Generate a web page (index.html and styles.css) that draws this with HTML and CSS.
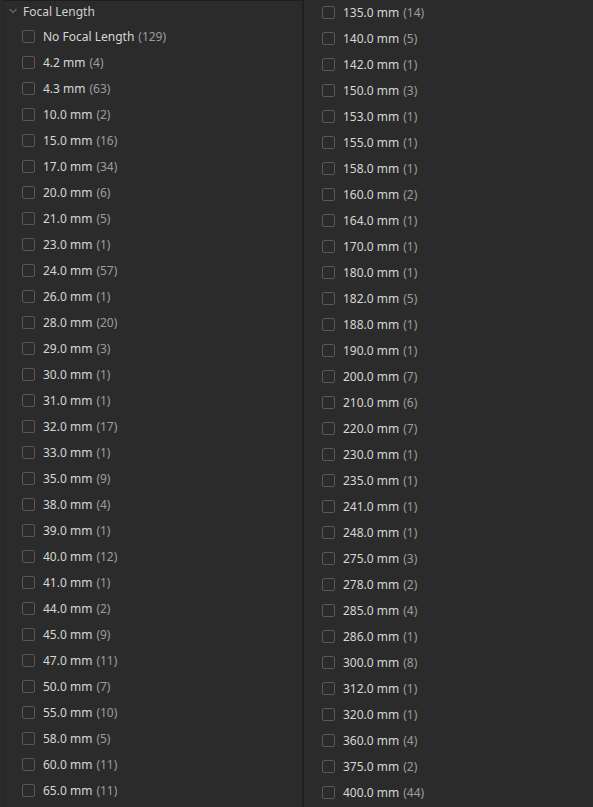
FILE: index.html
```html
<!DOCTYPE html>
<html>
<head>
<meta charset="utf-8">
<link rel="stylesheet" href="styles.css">
</head>
<body>
<div class="panel">
  <div class="col col-left">
    <div class="header">
      <svg class="chev" width="8" height="6" viewBox="0 0 8 6"><path d="M0.5 1 L4 4.5 L7.5 1" fill="none" stroke="#9a9a9a" stroke-width="1"/></svg>
      <span class="title">Focal Length</span>
    </div>
    <div class="row"><span class="box"></span><span class="lbl">No Focal Length</span><span class="cnt">(129)</span></div>
    <div class="row"><span class="box"></span><span class="lbl">4.2 mm</span><span class="cnt">(4)</span></div>
    <div class="row"><span class="box"></span><span class="lbl">4.3 mm</span><span class="cnt">(63)</span></div>
    <div class="row"><span class="box"></span><span class="lbl">10.0 mm</span><span class="cnt">(2)</span></div>
    <div class="row"><span class="box"></span><span class="lbl">15.0 mm</span><span class="cnt">(16)</span></div>
    <div class="row"><span class="box"></span><span class="lbl">17.0 mm</span><span class="cnt">(34)</span></div>
    <div class="row"><span class="box"></span><span class="lbl">20.0 mm</span><span class="cnt">(6)</span></div>
    <div class="row"><span class="box"></span><span class="lbl">21.0 mm</span><span class="cnt">(5)</span></div>
    <div class="row"><span class="box"></span><span class="lbl">23.0 mm</span><span class="cnt">(1)</span></div>
    <div class="row"><span class="box"></span><span class="lbl">24.0 mm</span><span class="cnt">(57)</span></div>
    <div class="row"><span class="box"></span><span class="lbl">26.0 mm</span><span class="cnt">(1)</span></div>
    <div class="row"><span class="box"></span><span class="lbl">28.0 mm</span><span class="cnt">(20)</span></div>
    <div class="row"><span class="box"></span><span class="lbl">29.0 mm</span><span class="cnt">(3)</span></div>
    <div class="row"><span class="box"></span><span class="lbl">30.0 mm</span><span class="cnt">(1)</span></div>
    <div class="row"><span class="box"></span><span class="lbl">31.0 mm</span><span class="cnt">(1)</span></div>
    <div class="row"><span class="box"></span><span class="lbl">32.0 mm</span><span class="cnt">(17)</span></div>
    <div class="row"><span class="box"></span><span class="lbl">33.0 mm</span><span class="cnt">(1)</span></div>
    <div class="row"><span class="box"></span><span class="lbl">35.0 mm</span><span class="cnt">(9)</span></div>
    <div class="row"><span class="box"></span><span class="lbl">38.0 mm</span><span class="cnt">(4)</span></div>
    <div class="row"><span class="box"></span><span class="lbl">39.0 mm</span><span class="cnt">(1)</span></div>
    <div class="row"><span class="box"></span><span class="lbl">40.0 mm</span><span class="cnt">(12)</span></div>
    <div class="row"><span class="box"></span><span class="lbl">41.0 mm</span><span class="cnt">(1)</span></div>
    <div class="row"><span class="box"></span><span class="lbl">44.0 mm</span><span class="cnt">(2)</span></div>
    <div class="row"><span class="box"></span><span class="lbl">45.0 mm</span><span class="cnt">(9)</span></div>
    <div class="row"><span class="box"></span><span class="lbl">47.0 mm</span><span class="cnt">(11)</span></div>
    <div class="row"><span class="box"></span><span class="lbl">50.0 mm</span><span class="cnt">(7)</span></div>
    <div class="row"><span class="box"></span><span class="lbl">55.0 mm</span><span class="cnt">(10)</span></div>
    <div class="row"><span class="box"></span><span class="lbl">58.0 mm</span><span class="cnt">(5)</span></div>
    <div class="row"><span class="box"></span><span class="lbl">60.0 mm</span><span class="cnt">(11)</span></div>
    <div class="row"><span class="box"></span><span class="lbl">65.0 mm</span><span class="cnt">(11)</span></div>
  </div>
  <div class="divider"></div>
  <div class="col col-right">
    <div class="row"><span class="box"></span><span class="lbl">135.0 mm</span><span class="cnt">(14)</span></div>
    <div class="row"><span class="box"></span><span class="lbl">140.0 mm</span><span class="cnt">(5)</span></div>
    <div class="row"><span class="box"></span><span class="lbl">142.0 mm</span><span class="cnt">(1)</span></div>
    <div class="row"><span class="box"></span><span class="lbl">150.0 mm</span><span class="cnt">(3)</span></div>
    <div class="row"><span class="box"></span><span class="lbl">153.0 mm</span><span class="cnt">(1)</span></div>
    <div class="row"><span class="box"></span><span class="lbl">155.0 mm</span><span class="cnt">(1)</span></div>
    <div class="row"><span class="box"></span><span class="lbl">158.0 mm</span><span class="cnt">(1)</span></div>
    <div class="row"><span class="box"></span><span class="lbl">160.0 mm</span><span class="cnt">(2)</span></div>
    <div class="row"><span class="box"></span><span class="lbl">164.0 mm</span><span class="cnt">(1)</span></div>
    <div class="row"><span class="box"></span><span class="lbl">170.0 mm</span><span class="cnt">(1)</span></div>
    <div class="row"><span class="box"></span><span class="lbl">180.0 mm</span><span class="cnt">(1)</span></div>
    <div class="row"><span class="box"></span><span class="lbl">182.0 mm</span><span class="cnt">(5)</span></div>
    <div class="row"><span class="box"></span><span class="lbl">188.0 mm</span><span class="cnt">(1)</span></div>
    <div class="row"><span class="box"></span><span class="lbl">190.0 mm</span><span class="cnt">(1)</span></div>
    <div class="row"><span class="box"></span><span class="lbl">200.0 mm</span><span class="cnt">(7)</span></div>
    <div class="row"><span class="box"></span><span class="lbl">210.0 mm</span><span class="cnt">(6)</span></div>
    <div class="row"><span class="box"></span><span class="lbl">220.0 mm</span><span class="cnt">(7)</span></div>
    <div class="row"><span class="box"></span><span class="lbl">230.0 mm</span><span class="cnt">(1)</span></div>
    <div class="row"><span class="box"></span><span class="lbl">235.0 mm</span><span class="cnt">(1)</span></div>
    <div class="row"><span class="box"></span><span class="lbl">241.0 mm</span><span class="cnt">(1)</span></div>
    <div class="row"><span class="box"></span><span class="lbl">248.0 mm</span><span class="cnt">(1)</span></div>
    <div class="row"><span class="box"></span><span class="lbl">275.0 mm</span><span class="cnt">(3)</span></div>
    <div class="row"><span class="box"></span><span class="lbl">278.0 mm</span><span class="cnt">(2)</span></div>
    <div class="row"><span class="box"></span><span class="lbl">285.0 mm</span><span class="cnt">(4)</span></div>
    <div class="row"><span class="box"></span><span class="lbl">286.0 mm</span><span class="cnt">(1)</span></div>
    <div class="row"><span class="box"></span><span class="lbl">300.0 mm</span><span class="cnt">(8)</span></div>
    <div class="row"><span class="box"></span><span class="lbl">312.0 mm</span><span class="cnt">(1)</span></div>
    <div class="row"><span class="box"></span><span class="lbl">320.0 mm</span><span class="cnt">(1)</span></div>
    <div class="row"><span class="box"></span><span class="lbl">360.0 mm</span><span class="cnt">(4)</span></div>
    <div class="row"><span class="box"></span><span class="lbl">375.0 mm</span><span class="cnt">(2)</span></div>
    <div class="row"><span class="box"></span><span class="lbl">400.0 mm</span><span class="cnt">(44)</span></div>
  </div>
</div>
</body>
</html>
```
FILE: styles.css
```css
html, body {
  margin: 0;
  padding: 0;
  background: #2b2b2b;
  width: 593px;
  height: 807px;
  overflow: hidden;
}
.panel {
  display: flex;
  height: 807px;
  font-family: "Noto Sans", "Open Sans", sans-serif;
  font-size: 12px;
  color: #d4d4d4;
}
.col {
  display: flex;
  flex-direction: column;
}
.col-left {
  width: 298px;
  margin-left: 3px;
  border-left: 1px solid #232323;
  border-top: 1px solid #1e1e1e;
}
.divider {
  width: 2px;
  background: #1f1f1f;
}
.col-right {
  flex: 1;
  margin-top: -1px;
}
.header {
  height: 20px;
  display: flex;
  align-items: center;
  padding-left: 5px;
  margin-bottom: 2px;
}
.chev {
  margin-right: 6px;
}
.title {
  color: #d0d0d0;
}
.row {
  height: 26px;
  display: flex;
  align-items: center;
  padding-left: 18px;
  white-space: nowrap;
}
.box {
  width: 11px;
  height: 11px;
  border: 1px solid #595959;
  border-radius: 2px;
  margin-right: 8px;
  flex: none;
}
.lbl {
  color: #d6d6d6;
}
.cnt {
  color: #9d9d9d;
  margin-left: 4px;
}
```
